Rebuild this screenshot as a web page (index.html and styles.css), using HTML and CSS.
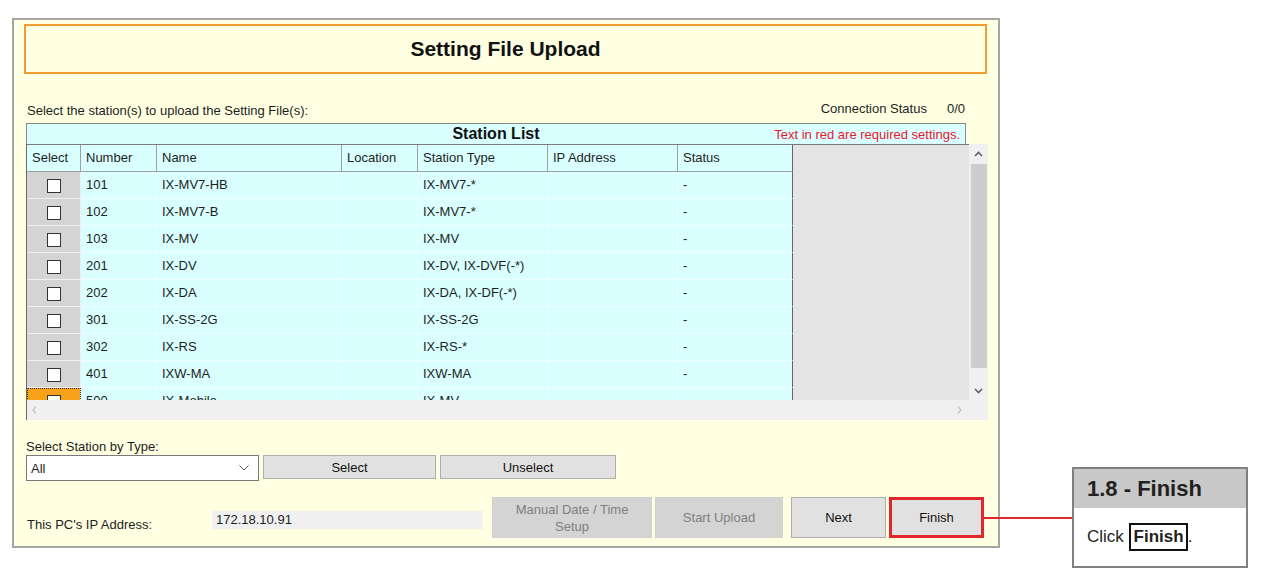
FILE: index.html
```html
<!DOCTYPE html>
<html lang="en">
<head>
    <meta charset="UTF-8">
    <meta name="viewport" content="width=device-width, initial-scale=1.0">
    <title>Setting File Upload</title>
    <link rel="stylesheet" href="styles.css">
</head>
<body>

    <div class="stage">
        <div class="window">
            <div class="title-box">Setting File Upload</div>

            <div class="top-line">
                <span>Select the station(s) to upload the Setting File(s):</span>
                <span class="conn"><span>Connection Status</span><span>0/0</span></span>
            </div>

            <div class="list-caption">
                <span></span>
                <span class="caption-title">Station List</span>
                <span class="required-note">Text in red are required settings.</span>
            </div>

            <div class="grid-box">
                <div class="grid-area">
                    <div class="grid-view">
                        <table class="station-table">
                            <thead>
                                <tr>
                                    <th class="c-sel">Select</th>
                                    <th class="c-num">Number</th>
                                    <th class="c-name">Name</th>
                                    <th class="c-loc">Location</th>
                                    <th class="c-type">Station Type</th>
                                    <th class="c-ip">IP Address</th>
                                    <th class="c-status">Status</th>
                                </tr>
                            </thead>
                            <tbody>
                                <tr><td class="sel-cell"><span class="check"></span></td><td>101</td><td>IX-MV7-HB</td><td></td><td>IX-MV7-*</td><td></td><td>-</td></tr>
                                <tr><td class="sel-cell"><span class="check"></span></td><td>102</td><td>IX-MV7-B</td><td></td><td>IX-MV7-*</td><td></td><td>-</td></tr>
                                <tr><td class="sel-cell"><span class="check"></span></td><td>103</td><td>IX-MV</td><td></td><td>IX-MV</td><td></td><td>-</td></tr>
                                <tr><td class="sel-cell"><span class="check"></span></td><td>201</td><td>IX-DV</td><td></td><td>IX-DV, IX-DVF(-*)</td><td></td><td>-</td></tr>
                                <tr><td class="sel-cell"><span class="check"></span></td><td>202</td><td>IX-DA</td><td></td><td>IX-DA, IX-DF(-*)</td><td></td><td>-</td></tr>
                                <tr><td class="sel-cell"><span class="check"></span></td><td>301</td><td>IX-SS-2G</td><td></td><td>IX-SS-2G</td><td></td><td>-</td></tr>
                                <tr><td class="sel-cell"><span class="check"></span></td><td>302</td><td>IX-RS</td><td></td><td>IX-RS-*</td><td></td><td>-</td></tr>
                                <tr><td class="sel-cell"><span class="check"></span></td><td>401</td><td>IXW-MA</td><td></td><td>IXW-MA</td><td></td><td>-</td></tr>
                                <tr><td class="sel-cell focused"><span class="check"></span></td><td>500</td><td>IX-Mobile</td><td></td><td>IX-MV</td><td></td><td></td></tr>
                            </tbody>
                        </table>
                    </div>
                    <div class="vscroll">
                        <div class="sb-arrow">
                            <svg width="9" height="6" viewBox="0 0 9 6"><path d="M1 5 L4.5 1.5 L8 5" fill="none" stroke="#606060" stroke-width="1.6"/></svg>
                        </div>
                        <div class="sb-thumb"></div>
                        <div class="sb-fill"></div>
                        <div class="sb-arrow">
                            <svg width="9" height="6" viewBox="0 0 9 6"><path d="M1 1 L4.5 4.5 L8 1" fill="none" stroke="#606060" stroke-width="1.6"/></svg>
                        </div>
                    </div>
                </div>
                <div class="hscroll">
                    <div class="hs-track">
                        <svg width="5" height="8" viewBox="0 0 5 8"><path d="M4 0.5 L1 4 L4 7.5" fill="none" stroke="#c4c4c4" stroke-width="1.3"/></svg>
                        <svg width="5" height="8" viewBox="0 0 5 8"><path d="M1 0.5 L4 4 L1 7.5" fill="none" stroke="#c4c4c4" stroke-width="1.3"/></svg>
                    </div>
                    <div class="hs-corner"></div>
                </div>
            </div>

            <div class="type-label">Select Station by Type:</div>
            <div class="type-row">
                <div class="dropdown">
                    <span>All</span>
                    <svg width="10" height="6" viewBox="0 0 10 6"><path d="M0.5 0.5 L5 5 L9.5 0.5" fill="none" stroke="#555" stroke-width="1"/></svg>
                </div>
                <button class="btn btn-select">Select</button>
                <button class="btn btn-unselect">Unselect</button>
            </div>

            <div class="bottom-row">
                <span class="ip-label">This PC's IP Address:</span>
                <span class="ip-box">172.18.10.91</span>
                <button class="btn btn-off btn-manual">Manual Date / Time<br>Setup</button>
                <button class="btn btn-off btn-upload">Start Upload</button>
                <button class="btn btn-next">Next</button>
                <button class="btn btn-finish">Finish</button>
            </div>
        </div>

        <div class="annot">
            <div class="leader"></div>
            <div class="callout">
                <div class="callout-head">1.8 - Finish</div>
                <div class="callout-body">Click <span class="key">Finish</span>.</div>
            </div>
        </div>
    </div>

</body>
</html>
```

FILE: styles.css
```css
body {
    font-family: 'Liberation Sans', Arial, sans-serif;
    font-size: 13px;
    color: #1e1e1e;
    background-color: #ffffff;
    margin: 0;
    padding: 0;
}
.stage {
    display: flex;
    align-items: flex-start;
    padding: 18px 0 0 12px;
}
.window {
    width: 988px;
    height: 530px;
    box-sizing: border-box;
    border: 2px solid #a6a6a6;
    background-color: #ffffe1;
    padding: 4px 10px 7px 10px;
}
.title-box {
    width: 963px;
    height: 50px;
    box-sizing: border-box;
    border: 2px solid #f39b30;
    display: flex;
    align-items: center;
    justify-content: center;
    font-size: 21px;
    font-weight: bold;
    color: #111;
}
.top-line {
    display: flex;
    justify-content: space-between;
    align-items: center;
    height: 16px;
    margin-top: 28px;
    padding: 0 23px 0 3px;
}
.conn {
    display: flex;
    gap: 20px;
    position: relative;
    top: -2px;
}
.list-caption {
    display: grid;
    grid-template-columns: 1fr auto 1fr;
    align-items: center;
    width: 940px;
    height: 21px;
    box-sizing: border-box;
    margin: 5px 0 0 2px;
    border: 1px solid #8a8a8a;
    border-bottom: none;
    background-color: #d9ffff;
}
.caption-title {
    font-size: 16px;
    font-weight: bold;
    color: #111;
}
.required-note {
    text-align: right;
    color: #e8182e;
    padding-right: 5px;
}
.grid-box {
    width: 962px;
    margin-left: 2px;
    box-sizing: border-box;
    border-left: 1px solid #6a6a6a;
}
.grid-area {
    display: flex;
    height: 256px;
}
.grid-view {
    flex: 1;
    overflow: hidden;
    border-top: 1px solid #7a7a7a;
    background-color: #e4e4e4;
}
.station-table {
    border-collapse: separate;
    border-spacing: 0;
    table-layout: fixed;
    width: 766px;
    background-color: #d9ffff;
}
.station-table th,
.station-table td {
    box-sizing: border-box;
    height: 27px;
    line-height: 26px;
    padding: 0 0 0 5px;
    text-align: left;
    font-weight: normal;
    white-space: nowrap;
    overflow: hidden;
}
.station-table th {
    border-right: 1px solid #a0a0a0;
    border-bottom: 1px solid #a0a0a0;
}
.station-table td {
    border-right: 1px solid #ecffff;
    border-bottom: 1px solid #eefefe;
}
.station-table th:last-child,
.station-table td:last-child {
    border-right-color: #666;
}
.c-sel { width: 54px; }
.c-num { width: 76px; }
.c-name { width: 185px; }
.c-loc { width: 76px; }
.c-type { width: 130px; }
.c-ip { width: 130px; }
.c-status { width: 115px; }
.station-table td.sel-cell {
    background-color: #d4d4d4;
    text-align: center;
    padding: 0;
    border-right-color: #eeeeee;
    border-bottom-color: #f0f0f0;
}
.station-table td.focused {
    background-color: #f8a21a;
    outline: 1px dotted #333;
    outline-offset: -1px;
}
.check {
    display: inline-block;
    width: 12px;
    height: 12px;
    border: 1px solid #333;
    background-color: #fff;
    vertical-align: middle;
}
.vscroll {
    width: 19px;
    display: flex;
    flex-direction: column;
    align-items: center;
    background-color: #f0f0f0;
}
.sb-arrow {
    height: 19px;
    width: 100%;
    display: flex;
    align-items: center;
    justify-content: center;
}
.sb-thumb {
    width: 16px;
    height: 204px;
    margin-top: 1px;
    background-color: #cdcdcd;
}
.sb-fill {
    flex: 1;
}
.hscroll {
    display: flex;
    height: 20px;
    background-color: #f0f0f0;
}
.hs-track {
    width: 942px;
    display: flex;
    justify-content: space-between;
    align-items: center;
    padding: 0 7px 0 5px;
    box-sizing: border-box;
}
.hs-corner {
    flex: 1;
}
.type-label {
    margin: 19px 0 0 2px;
    line-height: 16px;
}
.type-row {
    display: flex;
    align-items: flex-start;
    gap: 4px;
    margin-left: 2px;
}
.dropdown {
    width: 233px;
    height: 26px;
    box-sizing: border-box;
    border: 1px solid #7a7a7a;
    background-color: #fff;
    display: flex;
    align-items: center;
    justify-content: space-between;
    padding: 0 9px 0 4px;
}
.btn {
    font-family: 'Liberation Sans', Arial, sans-serif;
    font-size: 13px;
    color: #111;
    background-color: #e1e1e1;
    border: 1px solid #adadad;
    padding: 0;
    box-sizing: border-box;
    cursor: pointer;
}
.btn-select {
    width: 173px;
    height: 24px;
}
.btn-unselect {
    width: 176px;
    height: 24px;
}
.bottom-row {
    display: flex;
    align-items: stretch;
    height: 41px;
    margin: 16px 0 0 2px;
}
.ip-label {
    width: 186px;
    align-self: flex-end;
    line-height: 16px;
    padding: 0 0 5px 1px;
    box-sizing: border-box;
}
.ip-box {
    width: 271px;
    height: 18px;
    align-self: flex-start;
    margin-top: 14px;
    padding-left: 4px;
    line-height: 17px;
    box-sizing: border-box;
    background-color: #f0f0f0;
}
.btn-off {
    color: #7f7f7f;
    background-color: #d4d4d4;
    border-color: #d0d0d0;
    line-height: 17px;
}
.btn-manual {
    width: 160px;
    margin-left: 9px;
}
.btn-upload {
    width: 128px;
    margin-left: 3px;
}
.btn-next {
    width: 95px;
    margin-left: 8px;
}
.btn-finish {
    width: 95px;
    margin-left: 3px;
    border: 3px solid #e1262d;
}
.annot {
    display: flex;
    align-items: flex-start;
    margin-top: 449px;
}
.leader {
    width: 88px;
    height: 2px;
    margin: 50px 0 0 -16px;
    background-color: #e1262d;
    position: relative;
    z-index: 1;
}
.callout {
    width: 176px;
    height: 101px;
    box-sizing: border-box;
    border: 2px solid #808080;
    background-color: #fff;
}
.callout-head {
    height: 39px;
    background-color: #c8c8c8;
    display: flex;
    align-items: center;
    padding-left: 13px;
    font-size: 22px;
    font-weight: bold;
    color: #231f20;
}
.callout-body {
    padding: 15px 0 0 13px;
    font-size: 17px;
    color: #231f20;
}
.key {
    display: inline-block;
    border: 2px solid #111;
    padding: 1px 2px 2px 3px;
    font-weight: bold;
    line-height: 21px;
}
```
